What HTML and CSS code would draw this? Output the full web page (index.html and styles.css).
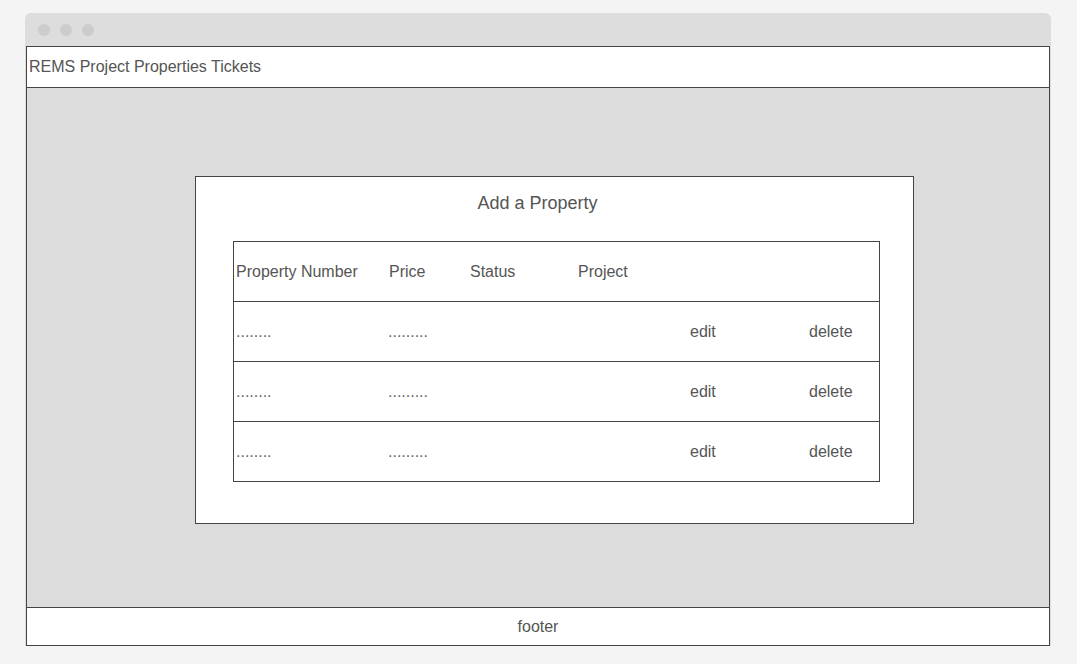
FILE: index.html
```html
<!DOCTYPE html>
<html lang="en">
<head>
<meta charset="utf-8">
<title>REMS - Add a Property</title>
<link rel="stylesheet" href="styles.css">
</head>
<body>
<div class="window">
  <div class="titlebar">
    <span class="dot"></span><span class="dot"></span><span class="dot"></span>
  </div>
  <div class="header">REMS Project Properties Tickets</div>
  <div class="main">
    <div class="card">
      <div class="card-title">Add a Property</div>
      <div class="table">
        <div class="row head">
          <div class="cell">Property Number</div>
          <div class="cell">Price</div>
          <div class="cell">Status</div>
          <div class="cell">Project</div>
          <div class="cell"></div>
          <div class="cell"></div>
        </div>
        <div class="row">
          <div class="cell dots">........</div>
          <div class="cell dots">.........</div>
          <div class="cell"></div>
          <div class="cell"></div>
          <div class="cell">edit</div>
          <div class="cell">delete</div>
        </div>
        <div class="row">
          <div class="cell dots">........</div>
          <div class="cell dots">.........</div>
          <div class="cell"></div>
          <div class="cell"></div>
          <div class="cell">edit</div>
          <div class="cell">delete</div>
        </div>
        <div class="row">
          <div class="cell dots">........</div>
          <div class="cell dots">.........</div>
          <div class="cell"></div>
          <div class="cell"></div>
          <div class="cell">edit</div>
          <div class="cell">delete</div>
        </div>
      </div>
    </div>
  </div>
  <div class="footer">footer</div>
</div>
</body>
</html>
```

FILE: styles.css
```css
html, body {
  margin: 0;
  padding: 0;
}
body {
  background: #f4f4f4;
  font-family: "Liberation Sans", Arial, sans-serif;
  color: #555;
  font-size: 16px;
}
.window {
  margin: 13px 0 0 25px;
  width: 1026px;
  background: #dddddd;
  border-radius: 6px 6px 0 0;
}
.titlebar {
  height: 33px;
  display: flex;
  align-items: center;
  gap: 10px;
  padding-left: 13px;
  box-sizing: border-box;
}
.dot {
  width: 12px;
  height: 12px;
  border-radius: 50%;
  background: #cccccc;
}
.header {
  margin: 0 1px;
  height: 40px;
  border: 1px solid #444;
  background: #fff;
  display: flex;
  align-items: center;
  padding-left: 2px;
  line-height: 20px;
}
.main {
  margin: 0 1px;
  height: 519px;
  border-left: 1px solid #444;
  border-right: 1px solid #444;
  background: #dcdcdc;
  padding-top: 88px;
  box-sizing: border-box;
}
.card {
  margin-left: 168px;
  width: 680px;
  height: 331px;
  border: 1px solid #444;
  background: #fff;
  padding: 15px 0 0 37px;
}
.card-title {
  font-size: 18px;
  line-height: 22px;
  text-align: center;
  padding-right: 34px;
  margin-left: -37px;
  margin-bottom: 27px;
}
.table {
  width: 645px;
  border: 1px solid #444;
}
.row {
  display: grid;
  grid-template-columns: 153px 81px 108px 112px 119px 1fr;
  height: 59px;
  align-items: center;
  border-top: 1px solid #444;
}
.row.head {
  border-top: none;
}
.cell {
  padding-left: 2px;
  line-height: 20px;
  white-space: nowrap;
}
.cell.dots + .cell.dots {
  margin-left: -1px;
}
.dots {
  color: #666;
}
.footer {
  margin: 0 1px;
  height: 37px;
  border: 1px solid #444;
  background: #fff;
  display: flex;
  align-items: center;
  justify-content: center;
  line-height: 20px;
}
```
